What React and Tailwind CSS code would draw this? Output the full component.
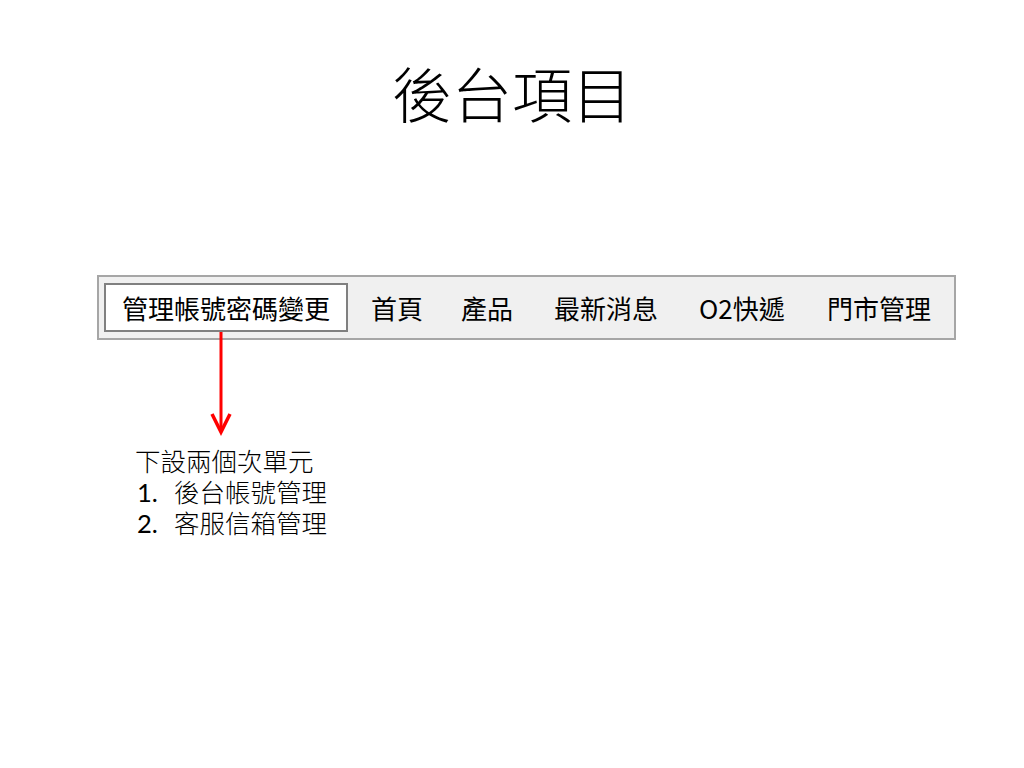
import React from "react";

// label + slot width so each item starts where the reference has it
const menu = [
	{ label: "首頁", w: "w-[90px]" },
	{ label: "產品", w: "w-[93px]" },
	{ label: "最新消息", w: "w-[145px]" },
	{ label: "O2快遞", w: "w-[128px]" },
	{ label: "門市管理", w: "w-[110px]" },
];

const cjk = { fontFamily: '"Noto Sans CJK TC", "Noto Sans", sans-serif' };
const list = { fontFamily: 'Lato, "Noto Sans CJK TC", sans-serif' };

const App = () => {
	return (
		<div className="w-[1024px] h-[768px] bg-white flex flex-col text-black overflow-hidden">
			<h1 className="mt-[54px] text-center text-[60px] leading-[76px] font-light" style={cjk}>
				後台項目
			</h1>

			<div className="relative mt-[145px] ml-[97px] w-[859px] h-[65px] bg-[#f0f0f0] border-2 border-[#a6a6a6] flex items-center" style={cjk}>
				<div className="ml-[5px] w-[244px] h-[49px] bg-white border-2 border-[#808080] flex items-center justify-center text-[26px] font-normal">
					管理帳號密碼變更
				</div>
				<div className="ml-[23px] flex items-center text-[26px] font-normal">
					{menu.map((m) => (
						<span key={m.label} className={m.w}>
							{m.label}
						</span>
					))}
				</div>
				<svg className="absolute left-[111px] top-[55px]" width="22" height="104" viewBox="0 0 22 104">
					<line x1="11" y1="0" x2="11" y2="100" stroke="#ff0000" strokeWidth="3" />
					<polyline points="2,82 11,100 20,82" fill="none" stroke="#ff0000" strokeWidth="3.5" />
				</svg>
			</div>

			<div className="mt-[106px] ml-[135px] text-[25.5px] leading-[31px] font-light" style={list}>
				<div>下設兩個次單元</div>
				<div className="flex">
					<span className="w-[39px] pl-[2px] font-normal">1.</span>
					<span>後台帳號管理</span>
				</div>
				<div className="flex">
					<span className="w-[39px] pl-[2px] font-normal">2.</span>
					<span>客服信箱管理</span>
				</div>
			</div>
		</div>
	);
};

export default App;
